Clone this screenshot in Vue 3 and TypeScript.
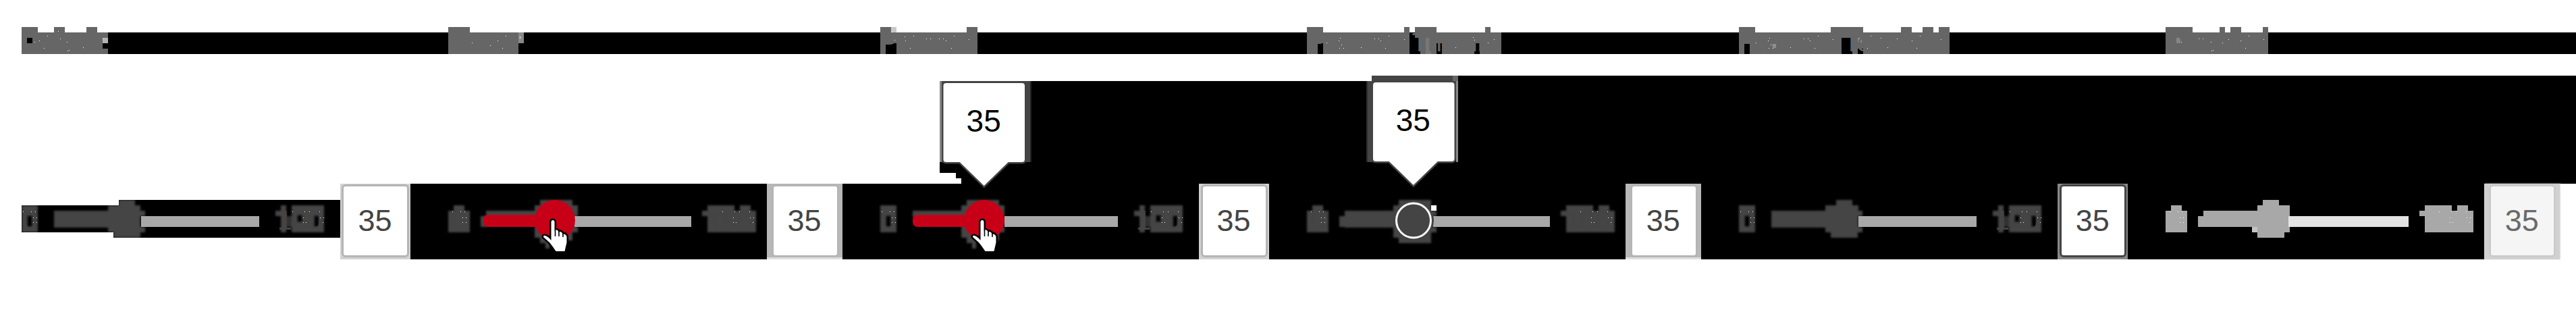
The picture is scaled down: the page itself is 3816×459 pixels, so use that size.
<script setup lang="ts">
type Rect = [x: number, y: number, w: number, h: number, fill?: string]
type Dot = [number, number]

interface Tip { left: number; top: number; x: number; y: number; tipX: number; lightSide: 'left' | 'right' }
interface State {
  title: string
  x: number
  width: number
  shapes: Rect[]
  dots: Dot[]
  color: string
  rail: string
  slider: Rect[]
  railFrom: number
  railTo: number
  zeroX: number
  maxX: number
  hot?: { from: number; cx: number }
  ring?: number
  tip?: Tip
  box: { x: number; w: number; inL: number; inR: number; tone: string; cx: number }
}

const K = '#000'
const narrowMax = (x: number): Rect[] => [
  [x, 312, 8, 8], [x + 8, 304, 8, 40], [x + 16, 320, 8, 16, '#303030'], [x + 24, 304, 48, 40],
  [x + 32, 318, 8, 11, K], [x + 57, 319, 8, 17, K],
]
const wideMax = (x: number): Rect[] => [
  [x, 312, 8, 8], [x + 8, 304, 40, 8], [x + 56, 304, 16, 8], [x + 8, 312, 72, 32],
]
const narrowZero = (x: number): Rect[] => [[x, 304, 24, 40], [x + 8, 319, 8, 17, K]]
const wideZero = (x: number): Rect[] => [[x + 8, 304, 16, 8], [x, 312, 32, 32]]
const hotBlocks = (x: number): Rect[] => [
  [x + 8, 296, 48, 60], [x, 304, 64, 16], [x, 320, 60, 24], [x, 336, 64, 8], [x, 344, 8, 8], [x + 8, 344, 10, 16], [x + 16, 356, 6, 12],
]

const states: State[] = [
  {
    title: 'Default', x: 32, width: 632, color: '#444', rail: '#a8a8a8',
    shapes: [[0, 40, 24, 8], [48, 40, 16, 8], [96, 40, 16, 8], [0, 48, 128, 32], [8, 56, 8, 8, K], [120, 56, 8, 8, '#b3b3b3'], [120, 64, 8, 8, K]],
    dots: [[54, 46], [38, 53], [57, 57], [19, 62], [26, 60], [67, 62], [33, 71], [68, 75], [70, 74], [91, 70], [120, 57]],
    slider: [...narrowZero(32), [80, 312, 82, 25], [176, 296, 24, 8], [160, 304, 48, 40], [168, 342, 40, 10], [206, 312, 9, 8], [206, 336, 9, 8], ...narrowMax(408)],
    railFrom: 209, railTo: 384, zeroX: 32, maxX: 433,
    box: { x: 504, w: 104, inL: 509, inR: 603, tone: 'soft', cx: 555.5 },
  },
  {
    title: 'Hover', x: 664, width: 640, color: '#444', rail: '#a8a8a8',
    shapes: [[0, 40, 32, 8], [0, 48, 104, 32], [104, 48, 8, 16, '#888']],
    dots: [[35, 63], [85, 53], [73, 60], [62, 67], [80, 71], [106, 54], [106, 55], [106, 56]],
    slider: [...wideZero(664), [720, 312, 72, 10], [712, 320, 10, 16], ...hotBlocks(792), ...wideMax(1040)],
    railFrom: 851, railTo: 1024, zeroX: 668, maxX: 1070, hot: { from: 716, cx: 822 },
    box: { x: 1136, w: 112, inL: 1145.5, inR: 1239.5, tone: 'wide', cx: 1191.5 },
  },
  {
    title: 'Pressed', x: 1304, width: 632, color: '#444', rail: '#a8a8a8',
    shapes: [[0, 40, 16, 8], [16, 40, 8, 8, '#c8c8c8'], [128, 40, 16, 8], [0, 48, 144, 32], [8, 64, 16, 16, K]],
    dots: [[17, 47], [21, 59], [36, 54], [37, 60], [49, 53], [44, 71], [68, 57], [74, 57], [87, 57], [93, 57], [97, 60], [109, 53], [105, 71], [131, 58]],
    slider: [...narrowZero(1304), [1352, 312, 80, 10], ...hotBlocks(1424), ...narrowMax(1680)],
    railFrom: 1488, railTo: 1656, zeroX: 1304, maxX: 1705, hot: { from: 1352, cx: 1458 },
    tip: { left: 1392, top: 120, x: 1397.5, y: 123, tipX: 1457.7, lightSide: 'left' },
    box: { x: 1776, w: 104, inL: 1782, inR: 1875, tone: 'soft', cx: 1827.5 },
  },
  {
    title: 'Focused Thumb', x: 1936, width: 640, color: '#444', rail: '#a8a8a8',
    shapes: [[0, 40, 24, 8], [144, 40, 8, 8], [160, 40, 32, 8], [264, 40, 8, 8], [0, 48, 152, 32], [16, 64, 8, 16, K], [160, 48, 128, 8], [168, 56, 120, 24], [176, 56, 8, 24, '#777'], [192, 64, 8, 16, K], [248, 64, 8, 16, K]],
    dots: [[29, 63], [49, 56], [47, 60], [51, 66], [48, 71], [54, 71], [80, 70], [100, 57], [106, 57], [109, 60], [116, 71], [121, 53], [144, 58], [220, 70], [246, 55], [248, 59], [268, 63], [277, 58]],
    slider: [...wideZero(1936), [1984, 320, 10, 16], [1992, 312, 76, 25], [2072, 296, 48, 64], [2064, 304, 56, 48], [2120, 312, 8, 8], [2118, 336, 10, 8], ...wideMax(2312)],
    railFrom: 2123, railTo: 2296, zeroX: 1940, maxX: 2341, ring: 2094,
    tip: { left: 2024, top: 112, x: 2034, y: 122, tipX: 2093.8, lightSide: 'right' },
    box: { x: 2408, w: 112, inL: 2418, inR: 2512, tone: 'wide', cx: 2463.7 },
  },
  {
    title: 'Focused Textfield', x: 2576, width: 632, color: '#444', rail: '#a8a8a8',
    shapes: [[0, 40, 24, 8], [136, 40, 48, 8], [240, 40, 16, 8], [272, 40, 16, 8], [296, 40, 16, 8], [0, 48, 312, 32], [8, 64, 8, 16, K], [152, 56, 16, 24, K], [176, 72, 8, 8, K], [176, 56, 6, 8, '#8d8d8d'], [48, 65, 7, 6, '#8d8d8d']],
    dots: [[25, 63], [45, 56], [43, 60], [47, 66], [44, 71], [50, 71], [76, 70], [96, 57], [102, 57], [105, 60], [112, 71], [117, 53], [139, 58], [195, 53], [210, 56], [190, 71], [220, 70], [234, 57], [256, 60], [263, 71], [268, 53], [299, 58]],
    slider: [...narrowZero(2576), [2624, 312, 82, 25], [2720, 296, 24, 8], [2704, 304, 49, 40], [2712, 342, 40, 10], [2750, 312, 9, 8], [2750, 336, 9, 8], ...narrowMax(2952)],
    railFrom: 2753, railTo: 2928, zeroX: 2576, maxX: 2977,
    box: { x: 3048, w: 104, inL: 3054, inR: 3147, tone: 'dark', cx: 3099.7 },
  },
  {
    title: 'Disabled', x: 3208, width: 608, color: '#a8a8a8', rail: '#e3e3e3',
    shapes: [[0, 40, 40, 8], [80, 40, 8, 8], [96, 40, 16, 8], [144, 40, 8, 8], [0, 48, 152, 32], [16, 56, 7, 8, '#858585']],
    dots: [[23, 62], [49, 57], [55, 57], [67, 62], [84, 63], [93, 58], [111, 60], [123, 53], [118, 71], [68, 75], [70, 74], [145, 58]],
    slider: [...wideZero(3208), [3256, 320, 8, 16], [3264, 312, 80, 24], [3352, 296, 24, 8], [3344, 304, 48, 40], [3344, 344, 40, 8], [3336, 336, 8, 8, '#c4c4c4'], ...wideMax(3584)],
    railFrom: 3390, railTo: 3568, zeroX: 3212, maxX: 3613,
    box: { x: 3680, w: 112, inL: 3690, inR: 3783, tone: 'off', cx: 3735.7 },
  },
]

const zeroDots: Dot[] = [[2, 313], [14, 313], [20, 313], [17, 322], [22, 322], [17, 329], [22, 329]]
const maxDots: Dot[] = [[0, 313], [18, 313], [25, 313], [40, 313], [16, 322], [20, 329], [41, 322], [45, 329], [16, 329], [46, 322]]
const labelDots = (s: State): Dot[] => [
  ...zeroDots.map(([x, y]): Dot => [x + s.zeroX, y]),
  ...maxDots.map(([x, y]): Dot => [x + s.maxX, y]),
]
const tipPath = (t: Tip) =>
  `M${t.x + 4} ${t.y}h112.5q4 0 4 4v109q0 4 -4 4H${t.tipX + 36}L${t.tipX} ${t.y + 152}L${t.tipX - 36} ${t.y + 117}H${t.x + 4}q-4 0 -4 -4v-109q0 -4 4 -4z`
const innerStyle = (s: State) => ({
  marginLeft: `${s.box.inL - s.box.x - 3}px`,
  width: `${s.box.inR - s.box.inL}px`,
  textIndent: `${(s.box.cx - (s.box.inL + s.box.inR) / 2) * 2}px`,
})
</script>

<template>
  <main class="board">
    <svg class="backdrop" viewBox="0 0 3816 459" aria-hidden="true">
      <rect x="160" y="48" width="3656" height="32" />
      <path d="M32 304H176V296H504V272H1424V264H1416V256H1392V120H2032V112H3816V272H3680V384H504V352H168V344H32Z" />
    </svg>

    <section v-for="s in states" :key="s.title" class="state" :style="{ width: s.width + 'px' }">
      <svg class="title" :width="s.width" height="40" :viewBox="`0 40 ${s.width} 40`">
        <rect v-for="(r, i) in s.shapes" :key="i" :x="r[0]" :y="r[1]" :width="r[2]" :height="r[3]" :fill="r[4] ?? '#666'" />
        <text x="0" y="76" fill="#666">{{ s.title }}</text>
        <rect v-for="(d, i) in s.dots" :key="'d' + i" :x="d[0]" :y="d[1]" width="1" height="1" fill="#fff" />
      </svg>

      <div class="control">
        <svg class="slider" :width="s.box.x - s.x" height="112" :viewBox="`${s.x} 272 ${s.box.x - s.x} 112`">
          <defs>
            <filter :id="'soft' + s.x" x="-2%" y="-10%" width="104%" height="120%">
              <feGaussianBlur stdDeviation="1.5" />
            </filter>
            <clipPath id="rowShape">
              <path d="M32 304H176V296H504V272H3680V384H504V352H168V344H32Z" />
            </clipPath>
          </defs>
          <g :clip-path="s.x === 32 ? 'url(#rowShape)' : undefined">
            <g :filter="s.title === 'Disabled' ? undefined : `url(#soft${s.x})`">
              <rect v-for="(r, i) in s.slider" :key="i" :x="r[0]" :y="r[1]" :width="r[2]" :height="r[3]" :fill="r[4] ?? s.color" />
            </g>
          </g>
          <text :x="s.zeroX + 1" y="340" :fill="s.color">0</text>
          <text :x="s.maxX - 22" y="340" :fill="s.color">100</text>
          <rect v-for="(d, i) in labelDots(s)" :key="'l' + i" :x="d[0]" :y="d[1]" width="1" height="1" fill="#fff" />
          <rect :x="s.railFrom" y="320" :width="s.railTo - s.railFrom" height="16" :fill="s.rail" />
          <g v-if="s.hot" fill="#c70018">
            <rect :x="s.hot.from" y="318" :width="s.hot.cx - s.hot.from" height="18" rx="7" />
            <circle :cx="s.hot.cx" cy="326" r="30" />
            <g :transform="`translate(${s.hot.cx - 822} 0)`">
              <path
                class="hand"
                d="M816.5 329Q816.5 326 819 326Q821.5 326 821.5 329V342Q824 338.500 827 342V344Q830 341.500 833 345V347Q837 345 839.500 350V359L836.500 372H823.500Q819 365 814 359L805 351Q804.500 348 808 349Q813 351 816.500 356Z"
              />
              <path class="finger" d="M822.500 341V350M828 343V350M834 346V351" />
            </g>
          </g>
          <template v-if="s.ring">
            <rect :x="s.ring + 26" y="304" width="8" height="8" fill="#fff" />
            <circle :cx="s.ring" cy="326.500" r="30" fill="#444" />
            <circle :cx="s.ring" cy="326.500" r="25.500" fill="#444" stroke="#fff" stroke-width="3" />
          </template>
        </svg>
        <div class="value" :class="s.box.tone" :style="{ width: s.box.w + 'px' }">
          <div class="field" :style="innerStyle(s)">35</div>
        </div>
      </div>

      <svg
        v-if="s.tip" class="tooltip" width="136" height="172"
        :style="{ left: s.tip.left - s.x + 'px', top: s.tip.top + 'px' }"
        :viewBox="`${s.tip.left} ${s.tip.top} 136 172`"
      >
        <g v-if="s.tip.lightSide === 'left'">
          <rect x="1392" y="120" width="134" height="120" fill="#444" />
          <rect x="1526" y="120" width="2" height="120" fill="#222" />
          <rect x="1392" y="120" width="3" height="120" fill="#888" />
        </g>
        <g v-else>
          <rect x="2024" y="120" width="3" height="120" fill="#2c2c2c" />
          <rect x="2026" y="120" width="8" height="120" fill="#444" />
          <rect x="2032" y="112" width="128" height="14" fill="#444" />
          <rect x="2152" y="112" width="8" height="8" fill="#666" />
          <rect x="2157" y="120" width="3" height="120" fill="#888" />
        </g>
        <path :d="tipPath(s.tip)" fill="#fff" stroke="#444" stroke-width="5" paint-order="stroke" />
        <text :x="s.tip.tipX - 0.5" :y="s.tip.y + 72" text-anchor="middle">35</text>
      </svg>
    </section>
  </main>
</template>

<style scoped>
.board {
  position: relative;
  display: flex;
  box-sizing: border-box;
  width: 3816px;
  height: 459px;
  padding-left: 32px;
  background: #fff;
  font-family: "Liberation Sans", Arial, sans-serif;
}
.backdrop {
  position: absolute;
  inset: 0;
  width: 3816px;
  height: 459px;
}
.state {
  position: relative;
  flex: none;
  padding-top: 40px;
}
.title {
  display: block;
  overflow: visible;
  font-size: 38px;
}
.control {
  display: flex;
  margin-top: 192px;
}
.slider {
  flex: none;
  overflow: visible;
  font-size: 40px;
}
.hand {
  fill: #fff;
  stroke: #000;
  stroke-width: 5;
  stroke-linejoin: round;
  paint-order: stroke;
}
.finger {
  fill: none;
  stroke: #000;
  stroke-width: 1.6;
}
.value {
  position: relative;
  flex: none;
  height: 112px;
  box-sizing: border-box;
  padding-top: 1px;
  background: #b5b5b5;
}
.field {
  height: 102px;
  border: 3px solid #b5b5b5;
  border-radius: 6px;
  background: #fff;
  color: #444;
  font-size: 45px;
  line-height: 102px;
  text-align: center;
}
.value.soft {
  background: #d2d2d2;
}
.value.wide {
  background: linear-gradient(#b8b8b8 109px, #dedede 109px);
}
.value.dark {
  background: #888;
}
.dark .field {
  border-color: #444;
}
.value.off {
  background: #d1d1d1;
  box-shadow: 1px 0 2px #ddd;
}
.off .field {
  border-color: #cbcbcb;
  background: #f5f5f5;
  color: #6a6a6a;
}
.tooltip {
  position: absolute;
  font-size: 46px;
}
</style>
